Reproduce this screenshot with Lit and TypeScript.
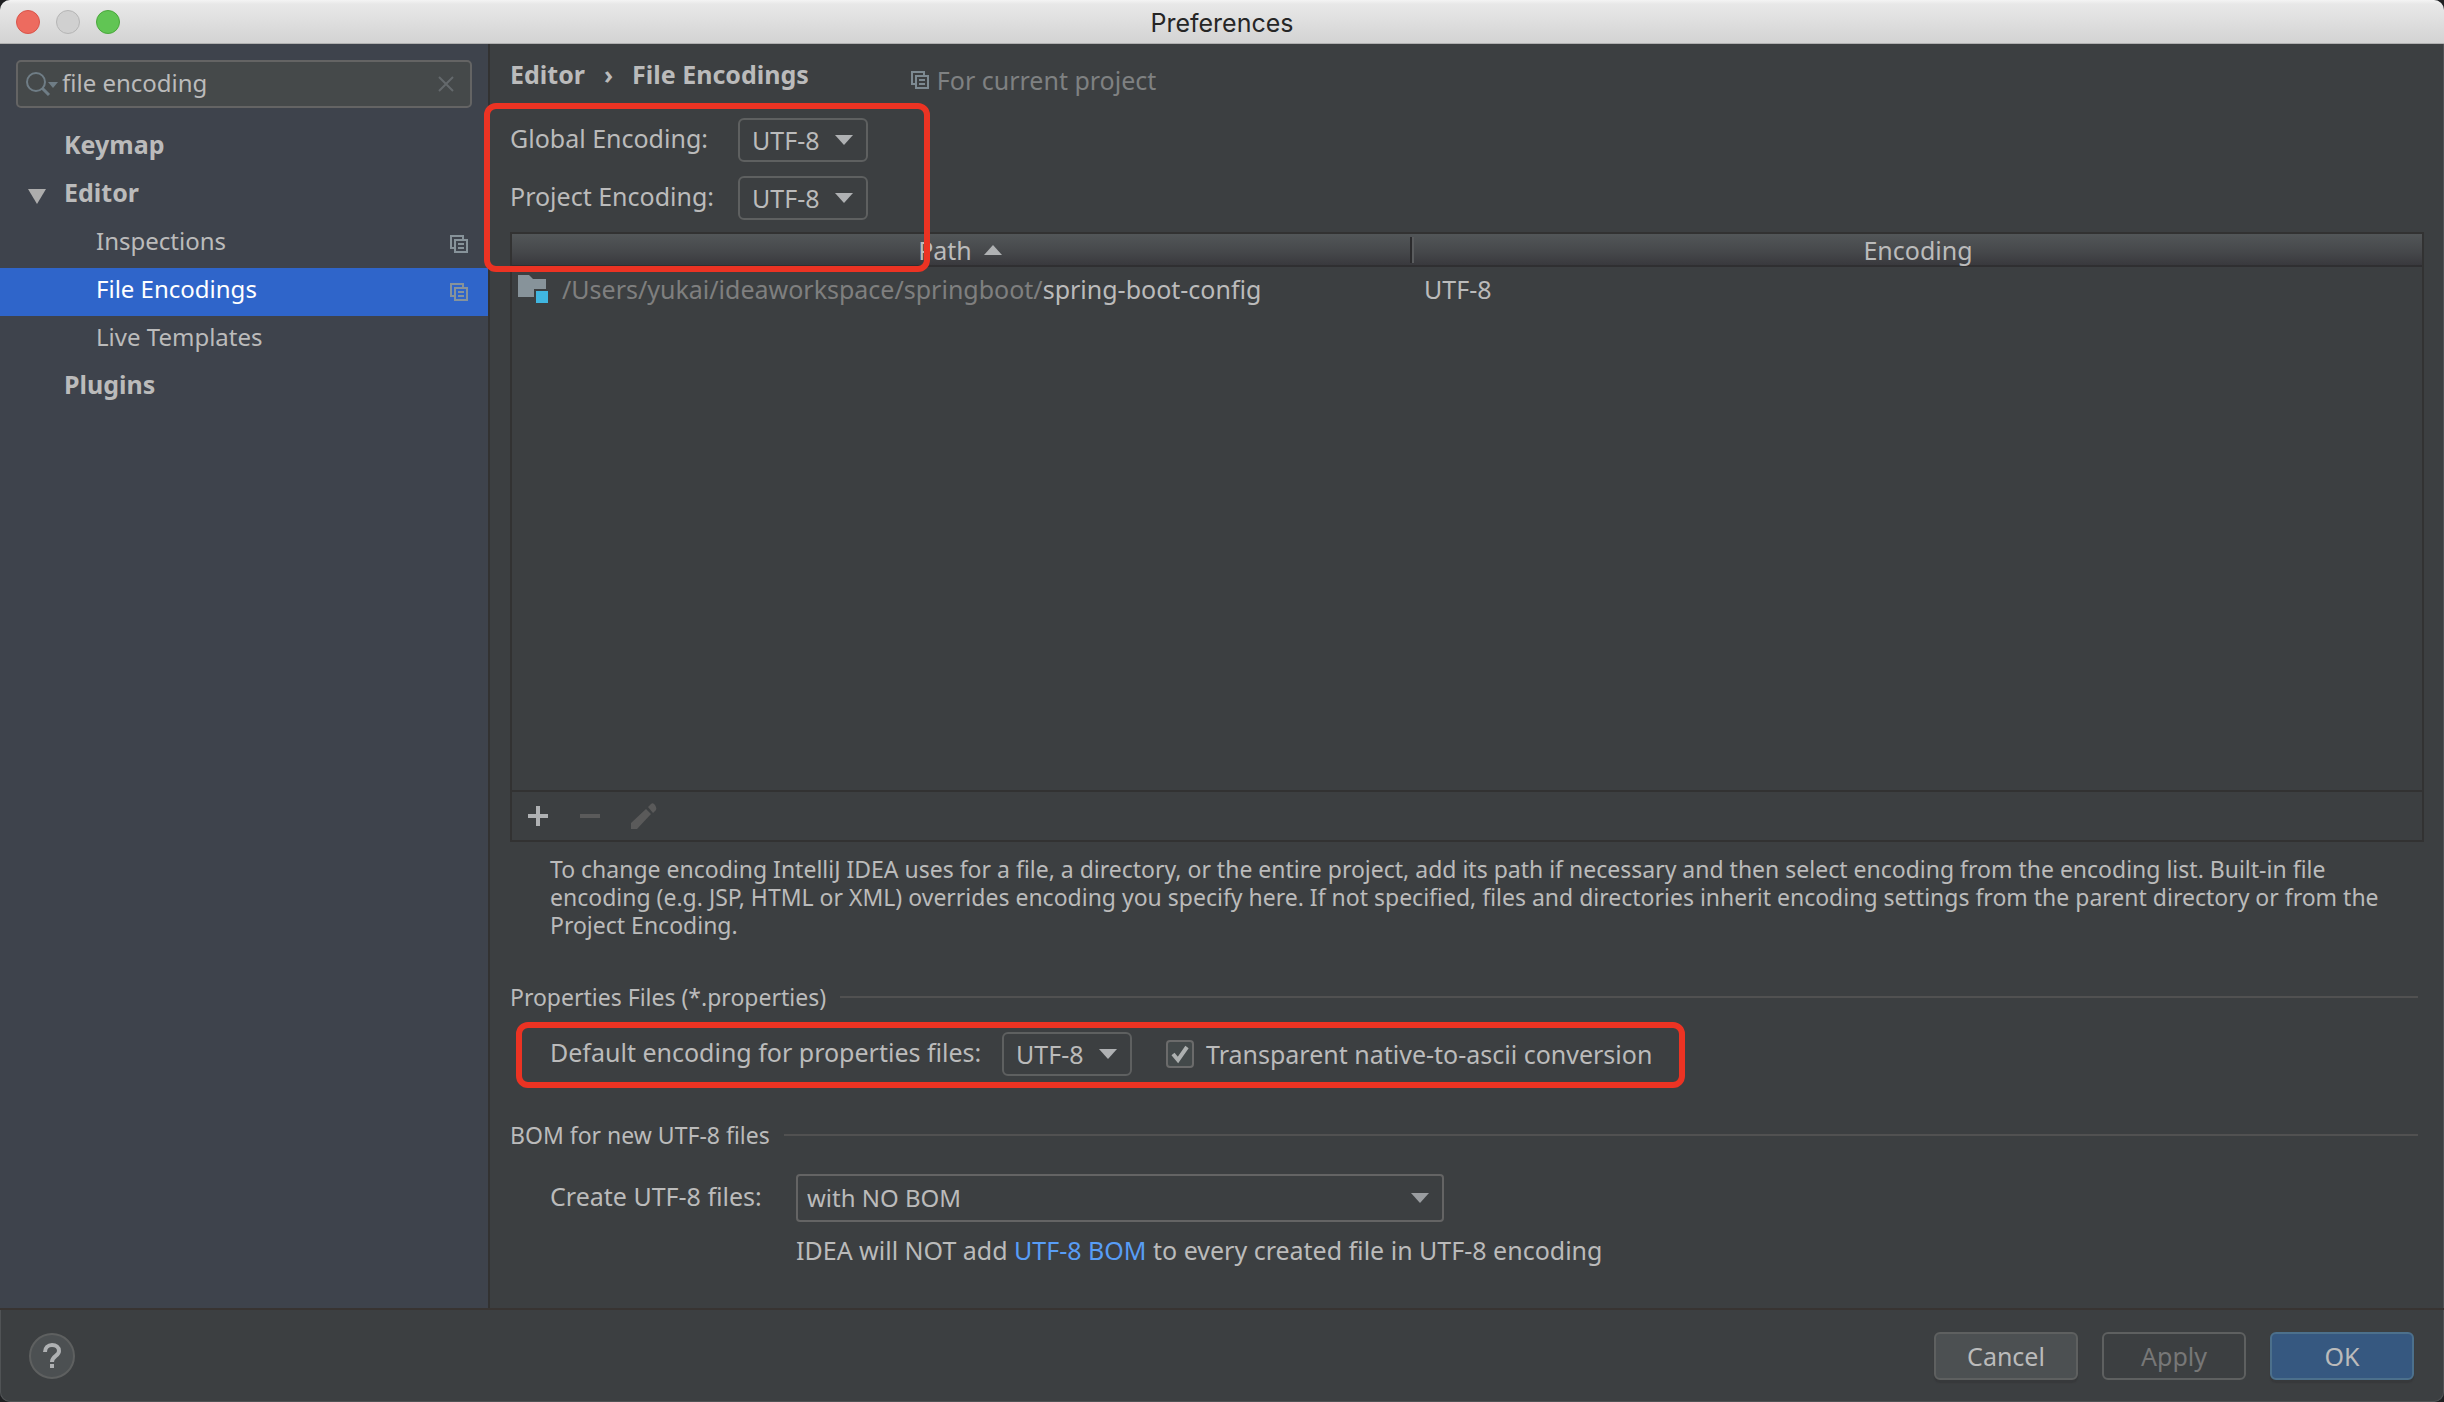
import { LitElement, html, css, svg, nothing } from "lit";
import { customElement, property, state } from "lit/decorators.js";
import { classMap } from "lit/directives/class-map.js";

const copyIcon = html`<svg class="copy" width="18" height="18" viewBox="0 0 18 18" fill="none" stroke="currentColor" stroke-width="2" aria-hidden="true">
  <path d="M13 4V1H1v12h3" /><rect x="5" y="5" width="12" height="12" /><path d="M8 9h6M8 13h6" />
</svg>`;

const arrow = (w: number, h: number, up = false) => html`<svg width=${w} height=${h} viewBox="0 0 ${w} ${h}" fill="currentColor" aria-hidden="true">
  ${up ? svg`<path d="M0 ${h}L${w / 2} 0L${w} ${h}z" />` : svg`<path d="M0 0H${w}L${w / 2} ${h}z" />`}
</svg>`;

const base = css`
  *, *::before, *::after { box-sizing: border-box; }
  button, input, select { font: inherit; color: inherit; margin: 0; outline: none; }
  svg { display: block; flex: none; }
`;

@customElement("combo-box")
class ComboBox extends LitElement {
  @property() label = "";
  @property({ type: Array }) options: string[] = [];
  @property({ type: Boolean, reflect: true }) wide = false;

  static styles = [base, css`
    :host { display: grid; width: 130px; height: 44px; color: #bbbbbb; font-size: 25px; }
    :host([wide]) { width: 648px; height: 48px; font-size: 24px; }
    .field { grid-area: 1 / 1; width: 100%; height: 100%; padding: 0 36px 0 12px; appearance: none;
      background: #3c3f41; border: 2px solid #5e6060; border-radius: 6px; }
    :host([wide]) .field { padding-left: 9px; border-color: #646464; border-radius: 4px; }
    .mark { grid-area: 1 / 1; place-self: center end; margin-right: 15px; color: #afb1b3; pointer-events: none; }
    :host([wide]) .mark { color: #9a9da0; }
  `];

  render() {
    return html`
      <select class="field" aria-label=${this.label}>${this.options.map((o) => html`<option>${o}</option>`)}</select>
      <span class="mark">${arrow(18, 10)}</span>`;
  }
}

interface Item { name: string; level: number; open?: boolean; project?: boolean; }

const items: Item[] = [
  { name: "Keymap", level: 1 },
  { name: "Editor", level: 1, open: true },
  { name: "Inspections", level: 2, project: true },
  { name: "File Encodings", level: 2, project: true },
  { name: "Live Templates", level: 2 },
  { name: "Plugins", level: 1 },
];

@customElement("settings-sidebar")
class SettingsSidebar extends LitElement {
  @state() private selected = "File Encodings";

  static styles = [base, css`
    :host { display: block; width: 490px; flex: none; background: #3e434c; border-right: 2px solid #323232; padding-top: 16px; }
    .search { display: flex; align-items: center; height: 48px; margin: 0 16px; padding: 0 16px 0 8px;
      background: #45494a; border: 2px solid #646464; border-radius: 5px; color: #6f7d86; }
    .query { flex: 1; min-width: 0; height: 44px; padding: 0 0 4px 4px; border: 0; background: none; color: #bbbbbb; font-size: 24px; }
    .clear { padding: 0; border: 0; background: none; color: #64696c; }
    .tree { margin: 16px 0 0; padding: 0; list-style: none; }
    .row { display: flex; align-items: center; width: 100%; height: 48px; padding: 0 20px 0 28px; border: 0;
      background: none; text-align: left; color: #bbbbbb; }
    .twisty { width: 36px; color: #adadad; }
    .name { flex: 1; padding-bottom: 8px; }
    .top .name { font-weight: 700; }
    .nested { font-size: 24px; }
    .nested .twisty { width: 68px; }
    .selected { background: #2f65ca; color: #ffffff; }
    .badge { color: #87939a; }
  `];

  render() {
    return html`
      <div class="search">
        <svg width="32" height="26" viewBox="0 0 32 26" fill="none" stroke="currentColor" aria-hidden="true">
          <circle cx="10" cy="11" r="9" stroke-width="2" /><path d="M16 17l7 7" stroke-width="3" />
          <path d="M22 11h10l-5 6z" fill="currentColor" stroke="none" />
        </svg>
        <input class="query" type="text" aria-label="Search settings" value="file encoding" />
        <button class="clear" aria-label="Clear search">
          <svg width="16" height="16" viewBox="0 0 16 16" stroke="currentColor" stroke-width="2"><path d="M1 1l14 14M15 1L1 15" /></svg>
        </button>
      </div>
      <ul class="tree">
        ${items.map((i) => html`<li>
          <button class=${classMap({ row: true, top: i.level === 1, nested: i.level === 2, selected: i.name === this.selected })}
            @click=${() => (this.selected = i.name)}>
            <span class="twisty">${i.open ? arrow(18, 15) : nothing}</span>
            <span class="name">${i.name}</span>
            ${i.project ? html`<span class="badge">${copyIcon}</span>` : nothing}
          </button>
        </li>`)}
      </ul>`;
  }
}

@customElement("encodings-panel")
class EncodingsPanel extends LitElement {
  static styles = [base, css`
    :host { display: flex; flex-direction: column; flex: 1; min-width: 0; padding: 14px 20px 42px; line-height: 32px; }
    .heading { display: flex; align-items: flex-start; height: 60px; }
    .crumbs { display: flex; gap: 19px; margin: 0; font-size: inherit; font-weight: 700; }
    .scope { display: flex; align-items: center; gap: 8px; margin-left: 102px; padding-top: 6px; color: #7f8182; }
    .scope svg { color: #7d8a92; }
    .caption { padding-bottom: 4px; }
    .globals { position: relative; display: grid; grid-template-columns: 228px max-content; row-gap: 14px; align-items: center; margin-bottom: 12px; }
    .callout { position: absolute; border: 6px solid #ec3323; border-radius: 12px; pointer-events: none; z-index: 1; }
    .globals .callout { left: -26px; top: -15px; width: 446px; height: 169px; }
    .list { display: flex; flex-direction: column; flex: 1; border: 2px solid #323232; }
    .paths { width: 100%; border-collapse: collapse; table-layout: fixed; }
    .paths th { height: 32px; padding: 0; font-weight: 400; line-height: 30px; border-bottom: 2px solid #2f2f31;
      background: linear-gradient(#525658, #45474a 60%, #39393d); }
    .paths .path { width: 902px; }
    .sort { display: flex; align-items: center; justify-content: center; gap: 12px; height: 26px; padding-right: 4px; border-right: 2px solid #5a5c5e; box-shadow: inset -2px 0 #2b2b2d; }
    .sort svg { color: #afb1b3; }
    .paths td { height: 48px; padding: 0 6px 4px; }
    .paths td + td { padding-left: 10px; }
    .file { display: flex; align-items: center; gap: 14px; white-space: nowrap; }
    .dir { color: #7f7f7f; }
    .tools { display: flex; align-items: center; gap: 30px; height: 50px; margin-top: auto; padding: 0 15px; border-top: 2px solid #323232; }
    .tool { padding: 0; border: 0; background: none; color: #afb1b3; }
    .tool:disabled { color: #5a5a5a; }
    .help { margin: 13px 40px 42px; font-size: 23px; line-height: 28px; }
    .section { display: flex; align-items: center; gap: 14px; margin: 0; padding-right: 6px; font-size: 23px; font-weight: 400; }
    .section::after { content: ""; flex: 1; height: 2px; background: #515151; }
    .props { position: relative; display: grid; grid-template-columns: 452px max-content max-content; align-items: center; align-self: flex-start; margin: 19px 0 43px 40px; }
    .props .callout { left: -34px; right: -33px; top: -10px; bottom: -12px; }
    .check { display: flex; align-items: center; gap: 12px; margin-left: 34px; }
    .box { display: grid; place-items: center; width: 28px; height: 28px; }
    .tick { grid-area: 1 / 1; width: 28px; height: 28px; appearance: none; background: #43494a; border: 2px solid #6b6b6b; border-radius: 4px; }
    .box svg { grid-area: 1 / 1; visibility: hidden; pointer-events: none; }
    .tick:checked + svg { visibility: visible; }
    .bom { display: grid; grid-template-columns: 246px max-content; row-gap: 12px; align-items: center; margin: 23px 0 0 40px; }
    .note { grid-column: 2; margin: 0; }
    .link { color: #589df6; text-decoration: none; }
  `];

  render() {
    return html`
      <header class="heading">
        <h1 class="crumbs"><span>Editor</span><span>›</span><span>File Encodings</span></h1>
        <span class="scope">${copyIcon}<span>For current project</span></span>
      </header>

      <div class="globals">
        <span class="caption">Global Encoding:</span><combo-box label="Global Encoding" .options=${["UTF-8"]}></combo-box>
        <span class="caption">Project Encoding:</span><combo-box label="Project Encoding" .options=${["UTF-8"]}></combo-box>
        <div class="callout"></div>
      </div>

      <div class="list">
        <table class="paths">
          <thead><tr>
            <th class="path"><div class="sort">Path ${arrow(18, 10, true)}</div></th>
            <th>Encoding</th>
          </tr></thead>
          <tbody><tr>
            <td><div class="file">
              <svg width="30" height="28" viewBox="0 0 30 28" aria-hidden="true">
                <path d="M0 0h11l4 4h13v10H16v8H0z" fill="#87939a" /><path d="M18 16h12v12H18z" fill="#40b6e0" />
              </svg>
              <span><span class="dir">/Users/yukai/ideaworkspace/springboot/</span>spring-boot-config</span>
            </div></td>
            <td>UTF-8</td>
          </tr></tbody>
        </table>
        <div class="tools">
          <button class="tool" aria-label="Add"><svg width="22" height="22" viewBox="0 0 22 22" fill="currentColor"><path d="M9 1h4v8h8v4h-8v8H9v-8H1V9h8z" /></svg></button>
          <button class="tool" aria-label="Remove" disabled><svg width="22" height="22" viewBox="0 0 22 22" fill="currentColor"><path d="M1 9h20v4H1z" /></svg></button>
          <button class="tool" aria-label="Edit" disabled><svg width="26" height="26" viewBox="0 0 26 26" fill="currentColor"><path d="M0 26v-6L15 6l5 5L6 26zM17 4l3-3q2-2 4 1t1 5l-3 3z" /></svg></button>
        </div>
      </div>

      <p class="help">To change encoding IntelliJ IDEA uses for a file, a directory, or the entire project, add its path if necessary and then select encoding from the encoding list. Built-in file encoding (e.g. JSP, HTML or XML) overrides encoding you specify here. If not specified, files and directories inherit encoding settings from the parent directory or from the Project Encoding.</p>

      <h2 class="section">Properties Files (*.properties)</h2>
      <div class="props">
        <span class="caption">Default encoding for properties files:</span>
        <combo-box label="Default encoding for properties files" .options=${["UTF-8"]}></combo-box>
        <label class="check">
          <span class="box"><input class="tick" type="checkbox" checked />
            <svg width="28" height="28" viewBox="0 0 28 28" fill="none" stroke="#adb0b0" stroke-width="4"><path d="M7 14l5 6l9-13" /></svg></span>
          Transparent native-to-ascii conversion
        </label>
        <div class="callout"></div>
      </div>

      <h2 class="section">BOM for new UTF-8 files</h2>
      <div class="bom">
        <span class="caption">Create UTF-8 files:</span>
        <combo-box wide label="Create UTF-8 files" .options=${["with NO BOM"]}></combo-box>
        <p class="note">IDEA will NOT add <a class="link" href="#bom">UTF-8 BOM</a> to every created file in UTF-8 encoding</p>
      </div>`;
  }
}

@customElement("app-root")
class AppRoot extends LitElement {
  static styles = [base, css`
    :host { display: block; background: #1f2022; font-family: "Noto Sans", "Open Sans", sans-serif; font-size: 25px; color: #bbbbbb; }
    .window { display: flex; flex-direction: column; min-height: 100vh; overflow: hidden; border-radius: 10px;
      background: #3c3f41; box-shadow: inset 0 0 0 1px #505355; }
    .titlebar { display: grid; grid-template-columns: 1fr auto 1fr; align-items: center; height: 44px; padding: 0 16px;
      background: linear-gradient(#f4f4f4, #e8e8e8 4px, #d3d3d3); border-bottom: 1px solid #b0b0b0; }
    .lights { display: flex; gap: 16px; }
    .light { width: 24px; height: 24px; padding: 0; border: 1px solid #b5b5b5; border-radius: 50%; background: #d0d0d0; }
    .close { background: #ed6b5f; border-color: #d9544a; }
    .zoom { background: #61c554; border-color: #4aa73c; }
    .title { margin: 0; padding-top: 2px; font: 400 25px/32px Inter, Roboto, sans-serif; color: #262626; }
    .body { display: flex; flex: 1; }
    .footer { display: flex; align-items: center; gap: 24px; height: 94px; padding: 0 30px 0 29px; border-top: 2px solid #383432; }
    .ask { display: grid; place-items: center; width: 46px; height: 46px; margin-right: auto; padding: 0; border: 2px solid #5e6060;
      border-radius: 50%; background: #4c5052; color: #afb1b3; }
    .action { width: 144px; height: 48px; padding: 0; border: 2px solid #5e6060; border-radius: 6px; background: #4c5052; box-shadow: 0 3px 1px #37393b; }
    .action:disabled { background: none; color: #777777; box-shadow: none; }
    .primary { background: #365880; border-color: #4c708c; }
  `];

  render() {
    return html`
      <div class="window">
        <header class="titlebar">
          <div class="lights">
            <button class="light close" aria-label="Close"></button>
            <button class="light" aria-label="Minimize"></button>
            <button class="light zoom" aria-label="Zoom"></button>
          </div>
          <p class="title">Preferences</p>
        </header>
        <div class="body">
          <settings-sidebar></settings-sidebar>
          <encodings-panel></encodings-panel>
        </div>
        <footer class="footer">
          <button class="ask" aria-label="Help">
            <svg width="18" height="26" viewBox="0 0 18 26" fill="none" stroke="currentColor" stroke-width="4">
              <path d="M2 9c0-4 3-7 7-7s7 2 7 6c0 5-7 5-7 11" /><path d="M7 23h4" />
            </svg>
          </button>
          <button class="action">Cancel</button>
          <button class="action" disabled>Apply</button>
          <button class="action primary">OK</button>
        </footer>
      </div>`;
  }
}
